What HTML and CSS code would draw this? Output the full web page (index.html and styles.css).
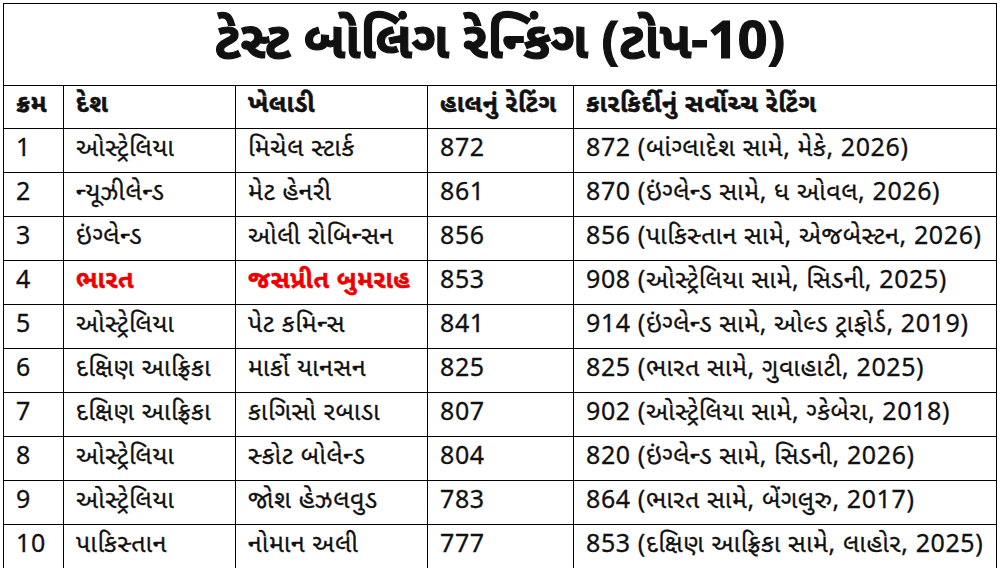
FILE: index.html
```html
<!DOCTYPE html>
<html lang="gu">
<head>
<meta charset="utf-8">
<title>ટેસ્ટ બોલિંગ રેન્કિંગ</title>
<link rel="stylesheet" href="styles.css">
</head>
<body>
<table class="rank">
  <colgroup>
    <col class="c-no"><col class="c-country"><col class="c-player"><col class="c-rating"><col class="c-best">
  </colgroup>
  <thead>
    <tr class="title-row"><th colspan="5" class="title">ટેસ્ટ બોલિંગ રેન્કિંગ (ટોપ-10)</th></tr>
    <tr class="head-row"><th>ક્રમ</th><th>દેશ</th><th>ખેલાડી</th><th>હાલનું રેટિંગ</th><th>કારકિર્દીનું સર્વોચ્ચ રેટિંગ</th></tr>
  </thead>
  <tbody>
    <tr><td>1</td><td>ઓસ્ટ્રેલિયા</td><td>મિચેલ સ્ટાર્ક</td><td>872</td><td>872 (બાંગ્લાદેશ સામે, મેકે, 2026)</td></tr>
    <tr><td>2</td><td>ન્યૂઝીલેન્ડ</td><td>મેટ હેનરી</td><td>861</td><td>870 (ઇંગ્લેન્ડ સામે, ધ ઓવલ, 2026)</td></tr>
    <tr><td>3</td><td>ઇંગ્લેન્ડ</td><td>ઓલી રોબિન્સન</td><td>856</td><td>856 (પાકિસ્તાન સામે, એજબેસ્ટન, 2026)</td></tr>
    <tr class="hl"><td>4</td><td class="red">ભારત</td><td class="red">જસપ્રીત બુમરાહ</td><td>853</td><td>908 (ઓસ્ટ્રેલિયા સામે, સિડની, 2025)</td></tr>
    <tr><td>5</td><td>ઓસ્ટ્રેલિયા</td><td>પેટ કમિન્સ</td><td>841</td><td>914 (ઇંગ્લેન્ડ સામે, ઓલ્ડ ટ્રાફોર્ડ, 2019)</td></tr>
    <tr><td>6</td><td>દક્ષિણ આફ્રિકા</td><td>માર્કો યાનસન</td><td>825</td><td>825 (ભારત સામે, ગુવાહાટી, 2025)</td></tr>
    <tr><td>7</td><td>દક્ષિણ આફ્રિકા</td><td>કાગિસો રબાડા</td><td>807</td><td>902 (ઓસ્ટ્રેલિયા સામે, ગ્કેબેરા, 2018)</td></tr>
    <tr><td>8</td><td>ઓસ્ટ્રેલિયા</td><td>સ્કોટ બોલેન્ડ</td><td>804</td><td>820 (ઇંગ્લેન્ડ સામે, સિડની, 2026)</td></tr>
    <tr><td>9</td><td>ઓસ્ટ્રેલિયા</td><td>જોશ હેઝલવુડ</td><td>783</td><td>864 (ભારત સામે, બેંગલુરુ, 2017)</td></tr>
    <tr><td>10</td><td>પાકિસ્તાન</td><td>નોમાન અલી</td><td>777</td><td>853 (દક્ષિણ આફ્રિકા સામે, લાહોર, 2025)</td></tr>
  </tbody>
</table>
</body>
</html>
```
FILE: styles.css
```css
html, body {
  margin: 0;
  padding: 0;
  background: #fff;
}
body {
  padding: 3px 0 0 3px;
  font-family: "Noto Sans Gujarati", "Hind Vadodara", "Lohit Gujarati", "Noto Sans", "DejaVu Sans", sans-serif;
  color: #111;
}
.rank {
  border-collapse: collapse;
  width: 993px;
  table-layout: fixed;
}
.c-no { width: 60px; }
.c-country { width: 172px; }
.c-player { width: 192px; }
.c-rating { width: 146px; }
.c-best { width: 423px; }
.rank th, .rank td {
  border: 1px solid #000;
  padding: 0 0 2px 12px;
  text-align: left;
  white-space: nowrap;
  font-size: 25px;
  letter-spacing: 0.6px;
}
.rank td {
  height: 41px;
  font-weight: 400;
  -webkit-text-stroke: 0.3px #111;
}
.head-row th {
  height: 40px;
  font-weight: 700;
  -webkit-text-stroke: 0.5px #111;
}
.title-row .title {
  height: 81px;
  font-size: 52px;
  font-weight: 700;
  letter-spacing: 0;
  text-align: center;
  padding: 0;
  -webkit-text-stroke: 1.2px #111;
}
.rank td.red {
  color: #ee0000;
  font-weight: 700;
  -webkit-text-stroke: 0.5px #ee0000;
}
```
